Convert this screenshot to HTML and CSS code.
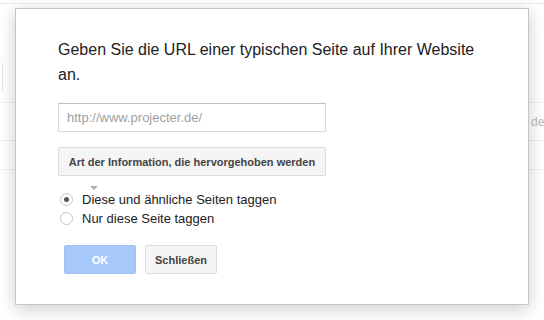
FILE: index.html
```html
<!DOCTYPE html>
<html lang="de">
<head>
    <meta charset="UTF-8">
    <title>Seite taggen</title>
    <link rel="stylesheet" href="styles.css">
</head>
<body>
    <div class="page">
        <div class="topbar"></div>
        <div class="toolbar">
            <div class="search-box"></div>
        </div>
        <div class="table">
            <div class="row"><span class="cell-text">de</span></div>
            <div class="row short"></div>
        </div>
    </div>

    <div class="dialog">
        <h2 class="dialog-title">Geben Sie die URL einer typischen Seite auf Ihrer Website an.</h2>
        <input type="text" class="url-input" placeholder="http://www.projecter.de/">
        <button class="btn btn-wide">Art der Information, die hervorgehoben werden</button>
        <div class="arrow"></div>
        <div class="options">
            <label class="option">
                <span class="radio checked"></span>
                Diese und ähnliche Seiten taggen
            </label>
            <label class="option">
                <span class="radio"></span>
                Nur diese Seite taggen
            </label>
        </div>
        <div class="actions">
            <button class="btn btn-primary" disabled>OK</button>
            <button class="btn">Schließen</button>
        </div>
    </div>
</body>
</html>
```

FILE: styles.css
```css
body {
    font-family: Arial, 'Liberation Sans', sans-serif;
    margin: 0;
    padding: 0;
    background-color: #fff;
    color: #222;
    width: 544px;
    height: 320px;
    overflow: hidden;
    position: relative;
}
.page {
    width: 100%;
}
.topbar {
    height: 3px;
    border-bottom: 1px solid #ebebeb;
}
.toolbar {
    height: 98px;
    padding-top: 59px;
    box-sizing: border-box;
}
.search-box {
    width: 2px;
    height: 29px;
    border-right: 1px solid #e5e5e5;
}
.table {
    border-top: 1px solid #f0f0f0;
}
.row {
    height: 37px;
    border-bottom: 1px solid #f0f0f0;
    display: flex;
    align-items: center;
    padding-left: 531px;
    font-size: 12px;
    color: #bbb;
    white-space: nowrap;
}
.row.short {
    height: 28px;
}

/* Dialog */
.dialog {
    position: absolute;
    left: 15px;
    top: 8px;
    width: 514px;
    height: 297px;
    box-sizing: border-box;
    background-color: #fff;
    border: 1px solid #c5c5c5;
    box-shadow: 0 4px 16px rgba(0, 0, 0, 0.2);
    padding: 28px 42px 0;
}
.dialog-title {
    margin: 0 0 16px;
    font-size: 16px;
    font-weight: normal;
    line-height: 25px;
    color: #222;
    width: 420px;
}
.url-input {
    display: block;
    width: 268px;
    height: 29px;
    box-sizing: border-box;
    border: 1px solid #d9d9d9;
    border-top-color: #c0c0c0;
    padding: 0 8px;
    font-family: inherit;
    font-size: 13px;
    margin: 0 0 15px;
}
.url-input::placeholder {
    color: #a0a0a0;
}
.btn {
    height: 29px;
    min-width: 72px;
    padding: 0 8px;
    font-family: inherit;
    font-size: 11px;
    font-weight: bold;
    color: #444;
    background-color: #f5f5f5;
    border: 1px solid #dcdcdc;
    border-radius: 2px;
}
.btn-wide {
    display: block;
    width: 268px;
    height: 29px;
}
.btn-primary {
    background-color: #a6c8fb;
    border-color: #a1c2f5;
    color: #fff;
}
.arrow {
    width: 0;
    height: 0;
    margin: 10px 0 2px 32px;
    border-left: 4px solid transparent;
    border-right: 4px solid transparent;
    border-top: 4px solid #b0b0b0;
}
.options {
    display: flex;
    flex-direction: column;
    gap: 5px;
    font-size: 13px;
    color: #222;
}
.option {
    display: flex;
    align-items: center;
    gap: 9px;
    height: 14px;
    padding-left: 2px;
}
.radio {
    width: 13px;
    height: 13px;
    box-sizing: border-box;
    border-radius: 50%;
    border: 1px solid #c6c6c6;
    background-color: #fff;
    display: flex;
    align-items: center;
    justify-content: center;
}
.radio.checked::after {
    content: "";
    width: 5px;
    height: 5px;
    border-radius: 50%;
    background-color: #555;
}
.actions {
    display: flex;
    gap: 9px;
    margin: 20px 0 0 6px;
}
```
